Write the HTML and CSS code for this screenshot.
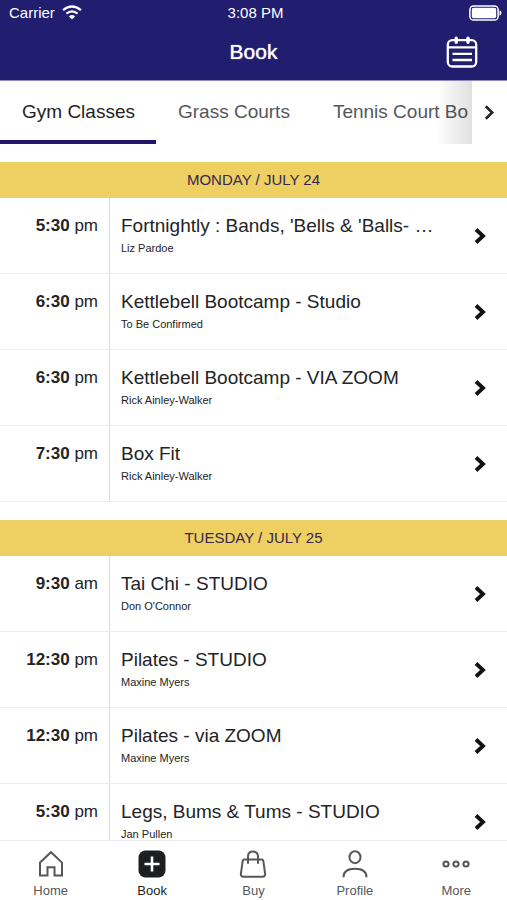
FILE: index.html
```html
<!DOCTYPE html>
<html lang="en">
<head>
<meta charset="utf-8">
<meta name="viewport" content="width=device-width, initial-scale=1">
<title>Book</title>
<link rel="stylesheet" href="styles.css">
</head>
<body>
<svg class="sprite" aria-hidden="true">
  <symbol id="chevron" viewBox="0 0 12 18"><path d="M2 2.500 9 9 2 15.500" fill="none" stroke="currentColor" stroke-width="3.800"/></symbol>
</svg>
<header class="header">
  <div class="status">
    <div class="carrier">
      <span>Carrier</span>
      <svg width="20" height="15" viewBox="0 0 20 15" fill="none" stroke="currentColor" stroke-width="2.200"><path d="M1 5.200Q10-2.200 19 5.200M4.400 8.700Q10 4 15.600 8.700"/><path d="M6.900 11.400Q10 8.800 13.100 11.400L10 14.600Z" fill="currentColor" stroke="none"/></svg>
    </div>
    <span>3:08 PM</span>
    <div class="battery">
      <svg width="33" height="16" viewBox="0 0 33 16"><rect x=".9" y=".9" width="28.200" height="14.200" rx="3.600" fill="none" stroke="currentColor" stroke-width="1.500"/><rect x="2.800" y="2.800" width="24.400" height="10.400" rx="1.800" fill="currentColor"/><path d="M30.500 5.200q2 .8 2 2.800t-2 2.800z" fill="currentColor"/></svg>
    </div>
  </div>
  <div class="titlebar">
    <h1>Book</h1>
    <button class="calendar" type="button" aria-label="Calendar">
      <svg width="32" height="32" viewBox="0 0 32 32" fill="none" stroke="currentColor" stroke-width="2.300"><rect x="1.800" y="4.200" width="28.400" height="26.300" rx="4.500"/><path d="M2 11.300h28M6.500 17.800h19.500M6.500 24h19.500"/><path d="M10.200 2.200v4M22 2.200v4" stroke-width="3.400" stroke-linecap="round"/></svg>
    </button>
  </div>
</header>
<nav class="tabs" aria-label="Categories">
  <div class="tablist">
    <a class="tab current" href="#gym" aria-current="true">Gym Classes</a>
    <a class="tab" href="#grass">Grass Courts</a>
    <a class="tab" href="#tennis">Tennis Court Bo</a>
  </div>
  <button class="next" type="button" aria-label="More categories"><svg width="11" height="15" viewBox="0 0 10 14"><path d="M1.500 1.200 7.500 7l-6 5.800" fill="none" stroke="currentColor" stroke-width="2.400"/></svg></button>
</nav>
<main class="schedule" id="gym">
  <section>
    <h2>MONDAY / JULY 24</h2>
    <ul>
      <li><a class="row" href="#c1"><span class="time"><b>5:30</b> pm</span><span class="info"><span class="name">Fortnightly : Bands, 'Bells &amp; 'Balls- …</span><span class="coach">Liz Pardoe</span></span><svg class="chevron"><use href="#chevron"/></svg></a></li>
      <li><a class="row" href="#c2"><span class="time"><b>6:30</b> pm</span><span class="info"><span class="name">Kettlebell Bootcamp - Studio</span><span class="coach">To Be Confirmed</span></span><svg class="chevron"><use href="#chevron"/></svg></a></li>
      <li><a class="row" href="#c3"><span class="time"><b>6:30</b> pm</span><span class="info"><span class="name">Kettlebell Bootcamp - VIA ZOOM</span><span class="coach">Rick Ainley-Walker</span></span><svg class="chevron"><use href="#chevron"/></svg></a></li>
      <li><a class="row" href="#c4"><span class="time"><b>7:30</b> pm</span><span class="info"><span class="name">Box Fit</span><span class="coach">Rick Ainley-Walker</span></span><svg class="chevron"><use href="#chevron"/></svg></a></li>
    </ul>
  </section>
  <section>
    <h2>TUESDAY / JULY 25</h2>
    <ul>
      <li><a class="row" href="#c5"><span class="time"><b>9:30</b> am</span><span class="info"><span class="name">Tai Chi - STUDIO</span><span class="coach">Don O'Connor</span></span><svg class="chevron"><use href="#chevron"/></svg></a></li>
      <li><a class="row" href="#c6"><span class="time"><b>12:30</b> pm</span><span class="info"><span class="name">Pilates - STUDIO</span><span class="coach">Maxine Myers</span></span><svg class="chevron"><use href="#chevron"/></svg></a></li>
      <li><a class="row" href="#c7"><span class="time"><b>12:30</b> pm</span><span class="info"><span class="name">Pilates - via ZOOM</span><span class="coach">Maxine Myers</span></span><svg class="chevron"><use href="#chevron"/></svg></a></li>
      <li><a class="row" href="#c8"><span class="time"><b>5:30</b> pm</span><span class="info"><span class="name">Legs, Bums &amp; Tums - STUDIO</span><span class="coach">Jan Pullen</span></span><svg class="chevron"><use href="#chevron"/></svg></a></li>
    </ul>
  </section>
</main>
<nav class="bottom" aria-label="Main">
  <a href="#home"><svg viewBox="0 0 28 28"><path d="M3 12.600 14 2.200l11 10.400v12.800h-7.500v-8.200h-7v8.200H3z"/></svg><span>Home</span></a>
  <a class="current" href="#book" aria-current="page"><svg viewBox="0 0 28 28"><rect x=".5" y=".5" width="27" height="27" rx="7" fill="currentColor" stroke="none"/><path d="M14 6.500v15M6.500 14h15" stroke="#fff" stroke-width="2.600"/></svg><span>Book</span></a>
  <a href="#buy"><svg viewBox="0 0 28 28"><path d="M5.200 9.600h17.600q1.300 0 1.500 1.300l1.800 12.600q.4 3.300-2.700 3.300H4.600q-3.100 0-2.700-3.300l1.800-12.600q.2-1.300 1.500-1.300zM9 13.800V6.500Q9 1.600 14 1.600t5 4.900v7.300"/></svg><span>Buy</span></a>
  <a href="#profile"><svg viewBox="0 0 28 28"><ellipse cx="14" cy="7.200" rx="5.500" ry="6"/><path d="M2.500 27.200C2.500 21.500 7 18.700 14 18.700s11.500 2.800 11.500 8.500"/></svg><span>Profile</span></a>
  <a href="#more"><svg viewBox="0 0 28 28"><circle cx="4" cy="14" r="2.600"/><circle cx="14" cy="14" r="2.600"/><circle cx="24" cy="14" r="2.600"/></svg><span>More</span></a>
</nav>
</body>
</html>
```

FILE: styles.css
```css
* { box-sizing: border-box; }
body {
  margin: 0;
  height: 100vh;
  display: flex;
  flex-direction: column;
  background: #fff;
  color: #222326;
  font-family: "Liberation Sans", Arial, sans-serif;
}
a { color: inherit; text-decoration: none; }
button { padding: 0; border: 0; background: none; color: inherit; font: inherit; cursor: pointer; }
svg { display: block; flex: none; }
.sprite { display: none; }

.header { background: #211d6f; color: #fff; border-bottom: 1px solid #8f8ac0; }
.status {
  display: grid;
  grid-template-columns: 1fr auto 1fr;
  align-items: center;
  height: 25px;
  padding: 0 5px 0 9px;
  font-size: 15px;
}
.carrier { display: flex; align-items: center; gap: 7px; }
.battery { display: flex; justify-content: flex-end; }
.titlebar {
  display: grid;
  grid-template-columns: 1fr auto 1fr;
  align-items: center;
  height: 55px;
  padding: 0 29px 2px;
}
h1 { grid-column: 2; margin: 0; font-size: 21px; font-weight: normal; text-shadow: 0 0 1px #fff; }
.calendar { justify-self: end; }

.tabs { display: flex; height: 63px; flex: none; }
.tablist { position: relative; display: flex; flex: 1; min-width: 0; overflow: hidden; }
.tablist::after {
  content: "";
  position: absolute;
  inset: 0 0 0 auto;
  width: 36px;
  background: linear-gradient(to right, rgba(0, 0, 0, 0), rgba(0, 0, 0, 0.12));
}
.tab {
  flex: none;
  padding: 0 21px 0 22px;
  border-bottom: 4px solid transparent;
  color: #55575b;
  font-size: 19px;
  line-height: 62px;
  white-space: nowrap;
}
.tab:last-child { padding-right: 0; }
.tab.current { color: #222326; border-color: #211669; }
.next { display: grid; place-items: center; width: 35px; }

.schedule { flex: 1; min-height: 0; overflow-y: auto; scrollbar-width: none; }
section { padding-top: 18px; }
h2 {
  margin: 0;
  background: #eed062;
  color: #37264f;
  font-size: 15px;
  font-weight: normal;
  line-height: 36px;
  text-align: center;
}
ul { margin: 0; padding: 0; list-style: none; }
.row { display: flex; height: 76px; border-bottom: 1px solid #ededee; }
.time {
  width: 110px;
  flex: none;
  padding: 16px 11px 0 0;
  border-right: 1px solid #dcdcde;
  font-size: 17px;
  line-height: 24px;
  text-align: right;
}
.info { flex: 1; min-width: 0; padding: 16px 0 0 11px; }
.name, .coach { display: block; white-space: nowrap; overflow: hidden; text-overflow: ellipsis; }
.name { font-size: 19px; line-height: 24px; }
.coach { font-size: 11px; line-height: 20px; }
.chevron { align-self: center; width: 12px; height: 18px; margin-right: 21px; color: #111; }

.bottom {
  display: grid;
  grid-template-columns: repeat(5, 1fr);
  flex: none;
  height: 60px;
  padding-top: 9px;
  border-top: 1px solid #ebebec;
  background: #fff;
  color: #55575b;
  font-size: 13px;
  line-height: 16px;
}
.bottom a { display: flex; flex-direction: column; align-items: center; gap: 5px; }
.bottom svg { width: 28px; height: 28px; fill: none; stroke: currentColor; stroke-width: 2; }
.bottom .current { color: #1d1e20; }
```
